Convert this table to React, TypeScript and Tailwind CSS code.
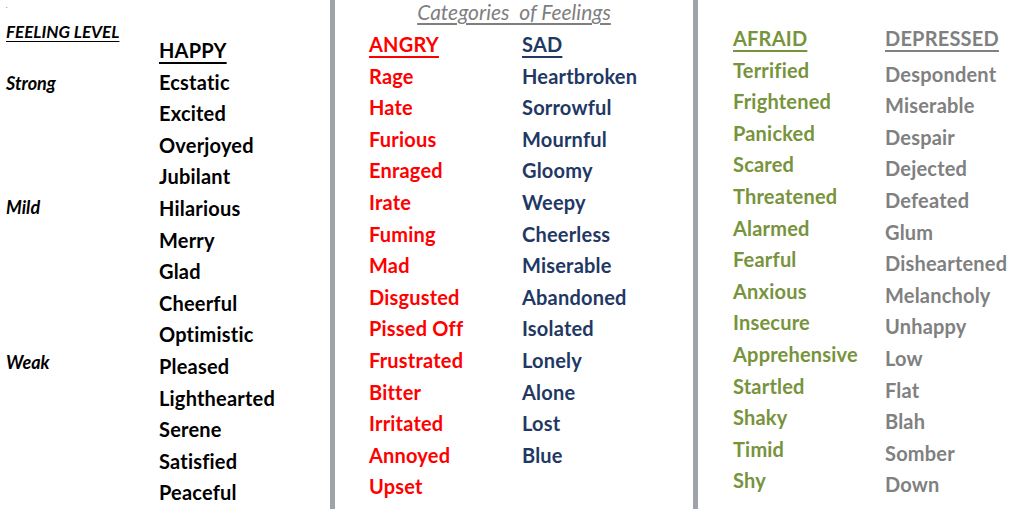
const happy = [
  "Ecstatic",
  "Excited",
  "Overjoyed",
  "Jubilant",
  "Hilarious",
  "Merry",
  "Glad",
  "Cheerful",
  "Optimistic",
  "Pleased",
  "Lighthearted",
  "Serene",
  "Satisfied",
  "Peaceful",
];

const angry = [
  "Rage",
  "Hate",
  "Furious",
  "Enraged",
  "Irate",
  "Fuming",
  "Mad",
  "Disgusted",
  "Pissed Off",
  "Frustrated",
  "Bitter",
  "Irritated",
  "Annoyed",
  "Upset",
];

const sad = [
  "Heartbroken",
  "Sorrowful",
  "Mournful",
  "Gloomy",
  "Weepy",
  "Cheerless",
  "Miserable",
  "Abandoned",
  "Isolated",
  "Lonely",
  "Alone",
  "Lost",
  "Blue",
];

const afraid = [
  "Terrified",
  "Frightened",
  "Panicked",
  "Scared",
  "Threatened",
  "Alarmed",
  "Fearful",
  "Anxious",
  "Insecure",
  "Apprehensive",
  "Startled",
  "Shaky",
  "Timid",
  "Shy",
];

const depressed = [
  "Despondent",
  "Miserable",
  "Despair",
  "Dejected",
  "Defeated",
  "Glum",
  "Disheartened",
  "Melancholy",
  "Unhappy",
  "Low",
  "Flat",
  "Blah",
  "Somber",
  "Down",
];

function WordColumn({
  title,
  words,
  color,
  className = "",
  gap = "",
}: {
  title: string;
  words: string[];
  color: string;
  className?: string;
  gap?: string;
}) {
  return (
    <div
      className={`flex flex-col font-bold text-[20px] tracking-[0.2px] leading-[31.6px] ${color} ${className}`}
    >
      <div className={`underline decoration-2 underline-offset-[4px] ${gap}`}>{title}</div>
      {words.map((w) => (
        <div key={w}>{w}</div>
      ))}
    </div>
  );
}

export default function App() {
  return (
    <div
      className="flex h-[509px] w-[1024px] overflow-hidden bg-white"
      style={{ fontFamily: "Lato, 'Open Sans', sans-serif" }}
    >
      {/* left: levels + happy */}
      <section className="flex w-[330px] shrink-0">
        <div className="flex w-[159px] shrink-0 flex-col pl-[6px] text-[18px] font-bold italic leading-[20px] text-black">
          <div className="h-[12px] text-[6px] font-normal not-italic leading-[12px]">.</div>
          <div className="mt-[10px] text-[17px] underline underline-offset-[3px]">FEELING LEVEL</div>
          <div className="mt-[31px]">Strong</div>
          <div className="mt-[104px]">Mild</div>
          <div className="mt-[135px]">Weak</div>
        </div>
        <WordColumn title="HAPPY" words={happy} color="text-black" className="pt-[35px]" />
      </section>

      <div className="w-[5px] shrink-0 bg-[#9fa3a8]" />

      {/* middle: categories */}
      <section className="flex w-[358px] shrink-0 flex-col">
        <div className="h-[24px] text-center text-[21px] italic leading-[23px] text-[#7f7f7f]">
          <span className="underline underline-offset-[3px] whitespace-pre">Categories  of Feelings</span>
        </div>
        <div className="mt-[5px] flex pl-[34px]">
          <WordColumn title="ANGRY" words={angry} color="text-[#ff0000]" className="w-[153px]" />
          <WordColumn title="SAD" words={sad} color="text-[#1f3864]" />
        </div>
      </section>

      <div className="w-[5px] shrink-0 bg-[#9fa3a8]" />

      {/* right */}
      <section className="flex flex-1 pl-[35px] pt-[23px]">
        <WordColumn title="AFRAID" words={afraid} color="text-[#77933c]" className="w-[152px]" />
        <WordColumn title="DEPRESSED" words={depressed} color="text-[#808080]" gap="mb-[4px]" />
      </section>
    </div>
  );
}
